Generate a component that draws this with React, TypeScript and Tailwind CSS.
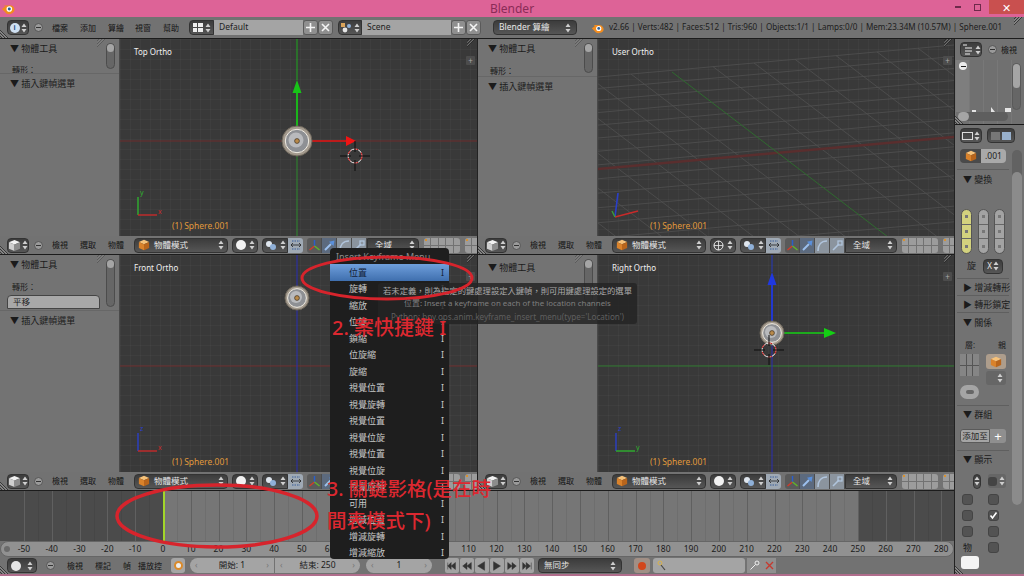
import * as React from "react";

const frames = Array.from({ length: 34 }, (_, i) => -50 + i * 10);

const menuItems = [
  "位置",
  "旋轉",
  "縮放",
  "位旋",
  "鎖縮",
  "位旋縮",
  "旋縮",
  "視覺位置",
  "視覺旋轉",
  "視覺位置",
  "視覺位旋",
  "視覺位置",
  "視覺位旋",
  "視覺旋轉",
  "可用",
  "增減位置",
  "增減旋轉",
  "增減縮放",
];

const Arrows = ({ dark = false }: { dark?: boolean }) => (
  <svg width="6" height="10" viewBox="0 0 6 10" className="shrink-0">
    <path d="M3 0.5 5.5 4H.5z M3 9.5 .5 6h5z" fill={dark ? "#333" : "#cfcfcf"} />
  </svg>
);

const Cube = ({ orange = false, size = 13 }: { orange?: boolean; size?: number }) => (
  <svg width={size} height={size} viewBox="0 0 14 14" className="shrink-0">
    <path d="M7 1 13 3.5 7 6 1 3.5z" fill={orange ? "#f6c27a" : "#f2f2f2"} />
    <path d="M1 3.5 7 6v7L1 10.5z" fill={orange ? "#d9822b" : "#cfcfcf"} />
    <path d="M13 3.5 7 6v7l6-2.5z" fill={orange ? "#b8651c" : "#8c8c8c"} />
  </svg>
);

const Dot = () => (
  <span className="flex h-[9px] w-[9px] shrink-0 items-center justify-center rounded-full border border-[#555] bg-[#9a9a9a]">
    <span className="h-px w-[5px] bg-[#333]" />
  </span>
);

const Dark = ({ className = "", children }: { className?: string; children?: React.ReactNode }) => (
  <div
    className={`flex h-[15px] shrink-0 items-center rounded-[4px] border border-[#333] bg-gradient-to-b from-[#3c3c3c] to-[#565656] text-[8.5px] text-[#e6e6e6] ${className}`}
  >
    {children}
  </div>
);

const Label = ({ children, className = "" }: { children: React.ReactNode; className?: string }) => (
  <span className={`shrink-0 text-[8px] leading-none text-[#151515] ${className}`}>{children}</span>
);

const Corner = ({ className }: { className: string }) => (
  <svg width="10" height="10" viewBox="0 0 10 10" className={`absolute ${className}`}>
    <path d="M0 2 8 10 M0 5 5 10 M0 8 2 10" stroke="#2a2a2a" strokeWidth="0.8" />
    <path d="M0 3.2 6.8 10 M0 6.2 3.8 10" stroke="#a8a8a8" strokeWidth="0.6" />
  </svg>
);

const PlusBtn = ({ x = false }: { x?: boolean }) => (
  <div className="flex h-[15px] w-[15px] shrink-0 items-center justify-center rounded-[3px] border border-[#5a5a5a] bg-[#8f8f8f]">
    <svg width="11" height="11" viewBox="0 0 11 11">
      {x ? (
        <path d="M2 2 9 9 M9 2 2 9" stroke="#f4f4f4" strokeWidth="1.6" />
      ) : (
        <path d="M5.5 1v9 M1 5.5h9" stroke="#f4f4f4" strokeWidth="1.6" />
      )}
    </svg>
  </div>
);

const BlenderLogo = ({ size = 14 }: { size?: number }) => (
  <svg width={size} height={size} viewBox="0 0 16 16" className="shrink-0">
    <path d="M1 9 5 6 3 5h5a6 5 0 1 1-4 7z" fill="#f28c1e" />
    <circle cx="9.5" cy="9.2" r="3.2" fill="#fff" />
    <circle cx="9.5" cy="9.2" r="1.7" fill="#2d5f96" />
  </svg>
);

const Layers = () => (
  <div className="grid h-[15px] w-[36px] shrink-0 grid-cols-5 gap-px overflow-hidden rounded-[3px]">
    {Array.from({ length: 10 }, (_, i) => (
      <span key={i} className="relative bg-[#9c9c9c]">
        {i === 0 && <span className="absolute left-px top-px h-[2px] w-[2px] bg-[#d8912f]" />}
      </span>
    ))}
  </div>
);

const ManipIcon = ({ kind }: { kind: number }) => (
  <div
    className={`flex h-[15px] w-[15px] shrink-0 items-center justify-center border-r border-[#4d4d4d] ${
      kind === 0 ? "rounded-l-[3px] bg-[#5a5a5a]" : kind === 1 ? "bg-[#5c6a7e]" : "bg-[#8b949e]"
    }`}
  >
    <svg width="13" height="13" viewBox="0 0 13 13">
      {kind === 0 && (
        <>
          <path d="M6.5 7V1" stroke="#2b5fc9" strokeWidth="1.5" />
          <path d="M6.5 7 1.5 11" stroke="#d43a2a" strokeWidth="1.5" />
          <path d="M6.5 7 11.5 11" stroke="#5fb52a" strokeWidth="1.5" />
        </>
      )}
      {kind === 1 && (
        <>
          <path d="M2 11 8 5" stroke="#9cc0ee" strokeWidth="2" />
          <path d="M11.5 1.5 10.5 7 6 2.8z" fill="#5a90dc" />
        </>
      )}
      {kind === 2 && <path d="M2 12C2 6 5 2 11 2" fill="none" stroke="#b0c4dc" strokeWidth="1.6" />}
      {kind === 3 && (
        <>
          <path d="M2 11 8 5" stroke="#b0c4dc" strokeWidth="1.6" />
          <rect x="7" y="2" width="4" height="4" fill="none" stroke="#b0c4dc" strokeWidth="1.3" />
        </>
      )}
    </svg>
  </div>
);

const ViewHeader = ({ wire = false, width }: { wire?: boolean; width: string }) => (
  <div className={`relative flex h-[19px] shrink-0 items-center overflow-hidden border-b border-[#1c1c1c] bg-[#727272] pl-[7px] ${width}`}>
    <Corner className="bottom-0 left-0" />
    <Dark className="w-[22px] justify-center gap-px">
      <Cube />
      <Arrows />
    </Dark>
    <span className="ml-[5px] mr-[9px]">
      <Dot />
    </span>
    <Label className="w-[28px]">檢視</Label>
    <Label className="w-[28px]">選取</Label>
    <Label className="w-[26px]">物體</Label>
    <Dark className="w-[94px] gap-[4px] px-[3px]">
      <Cube orange size={12} />
      <span className="flex-1">物體模式</span>
      <Arrows />
    </Dark>
    <Dark className="ml-[4px] w-[26px] justify-center gap-[3px]">
      {wire ? (
        <svg width="11" height="11" viewBox="0 0 11 11">
          <circle cx="5.5" cy="5.5" r="4.5" fill="none" stroke="#eee" />
          <path d="M1 5.5h9 M5.5 1v9" stroke="#eee" strokeWidth="0.8" />
        </svg>
      ) : (
        <span className="h-[10px] w-[10px] rounded-full bg-[#f2f2f2]" />
      )}
      <Arrows />
    </Dark>
    <Dark className="ml-[4px] w-[26px] justify-center gap-[3px] rounded-r-none">
      <svg width="12" height="11" viewBox="0 0 12 11">
        <circle cx="4" cy="4" r="3" fill="#dfe6ee" />
        <circle cx="8" cy="7" r="3" fill="#8fb0d8" />
      </svg>
      <Arrows />
    </Dark>
    <div className="flex h-[15px] w-[15px] shrink-0 items-center justify-center rounded-r-[3px] bg-[#9fa9b4]">
      <svg width="12" height="10" viewBox="0 0 12 10">
        <path d="M1 5h10 M1 5l2-2 M1 5l2 2 M11 5 9 3 M11 5 9 7" stroke="#222" fill="none" strokeWidth="0.8" />
        <path d="M2 1h8 M2 9h8" stroke="#3b5f9a" strokeDasharray="1.5 1" />
      </svg>
    </div>
    <div className="ml-[4px] flex shrink-0">
      <ManipIcon kind={0} />
      <ManipIcon kind={1} />
      <ManipIcon kind={2} />
      <ManipIcon kind={3} />
    </div>
    <Dark className="w-[52px] gap-[2px] rounded-l-none pl-[7px] pr-[3px]">
      <span className="flex-1">全域</span>
      <Arrows />
    </Dark>
    <div className="ml-[5px] flex shrink-0 gap-[5px]">
      <Layers />
      <Layers />
    </div>
  </div>
);

const Sphere = ({ cx, cy, r }: { cx: number; cy: number; r: number }) => (
  <g>
    <circle cx={cx} cy={cy} r={r} fill="#a39a8e" stroke="#6b6459" />
    <circle cx={cx} cy={cy} r={r * 0.78} fill="#8e9094" stroke="#f1ece2" strokeWidth="1" />
    <circle cx={cx - 1} cy={cy - 1} r={r * 0.5} fill="#b9babd" />
    <circle cx={cx} cy={cy} r="2.4" fill="#b98a4a" stroke="#3c3024" strokeWidth="0.7" />
  </g>
);

const Cursor3D = ({ cx, cy }: { cx: number; cy: number }) => (
  <g>
    <circle cx={cx} cy={cy} r="7" fill="none" stroke="#f0f0f0" strokeWidth="1" />
    <circle cx={cx} cy={cy} r="7" fill="none" stroke="#d01818" strokeWidth="1" strokeDasharray="4 4" />
    <path d={`M${cx - 15} ${cy}h11 M${cx + 4} ${cy}h11 M${cx} ${cy - 15}v11 M${cx} ${cy + 4}v11`} stroke="#0c0c0c" strokeWidth="1" />
  </g>
);

const Widget = ({ ox, oy, upColor, rightColor, up, right }: { ox: number; oy: number; upColor: string; rightColor: string; up: string; right: string }) => (
  <g>
    <path d={`M${ox} ${oy}v-18`} stroke={upColor} strokeWidth="1.4" />
    <path d={`M${ox} ${oy}h19`} stroke={rightColor} strokeWidth="1.4" />
    <text x={ox + 2} y={oy - 20} fontSize="7" fill={upColor} fontFamily="Noto Sans">
      {up}
    </text>
    <text x={ox + 20} y={oy - 1} fontSize="7" fill={rightColor} fontFamily="Noto Sans">
      {right}
    </text>
  </g>
);

const ArrowUp = ({ x, top, color, thin }: { x: number; top: number; color: string; thin: number }) => (
  <g>
    <path d={`M${x} 0V${top}`} stroke={color} strokeWidth="0.8" />
    <path d={`M${x} ${top}l-4.5 13h9z`} fill={color} />
    <path d={`M${x} ${top + 13}V${thin}`} stroke={color} strokeWidth="1.8" />
  </g>
);

const Ortho = ({ name, children }: { name: string; children: React.ReactNode }) => (
  <div className="relative min-w-0 flex-1 overflow-hidden bg-[#393939] bg-[linear-gradient(to_right,#ffffff07_1px,transparent_1px),linear-gradient(to_bottom,#ffffff07_1px,transparent_1px)] bg-[length:10px_10px]">
    <svg className="absolute inset-0 h-full w-full">{children}</svg>
    <span className="absolute left-[14px] top-[7px] text-[8px] leading-[11px] text-[#f0f0f0]">{name}</span>
    <span className="absolute bottom-[5px] left-[52px] text-[8.5px] leading-[11px] text-[#e0993c]">(1) Sphere.001</span>
    <Corner className="right-0 top-0 rotate-90" />
    <span className="absolute right-[2px] top-[17px] flex h-[9px] w-[9px] items-center justify-center rounded-[1px] bg-[#4c4c4c] text-[8px] leading-none text-[#aaa]">
      +
    </span>
  </div>
);

type ShelfProps = {
  button?: boolean;
  transformGap?: string;
  insertGap?: string;
  scroll: string;
  top?: string;
};

const Shelf = ({ button, transformGap, insertGap, scroll, top = "pt-[4px]" }: ShelfProps) => (
  <div className="relative w-[120px] shrink-0 overflow-hidden border-r border-[#4a4a4a] bg-[#737373] text-[#1b1b1b]">
    <Corner className="right-[12px] top-0 rotate-90 opacity-40" />
    <div className={`pl-[10px] text-[9px] leading-[12px] ${top}`}>▼ 物體工具</div>
    {transformGap && <div className={`pl-[12px] text-[8px] leading-[10px] ${transformGap}`}>轉形：</div>}
    {button && (
      <div className="ml-[7px] mt-[3px] flex h-[14px] w-[93px] items-center rounded-t-[4px] border border-[#444] bg-[#a8a8a8] pl-[5px] text-[8.5px]">
        平移
      </div>
    )}
    {insertGap && <div className={`relative border-t border-[#676767] bg-[#737373] pl-[10px] pt-[4px] text-[9px] leading-[12px] ${insertGap}`}>▼ 插入鍵幀選單</div>}
    <div className={`absolute right-[4px] top-[4px] w-[9px] rounded-full border border-[#4c4c4c] bg-[#666] ${scroll}`}>
      <div className="h-[8px] rounded-full bg-[#a5a5a5]" />
    </div>
  </div>
);

const perspectiveLines = () => {
  const lines: React.ReactNode[] = [];
  let y = 38;
  for (let i = 0; i < 17; i++) {
    lines.push(<line key={`a${i}`} x1={0} y1={y} x2={356} y2={y - 32} stroke="#505050" strokeWidth="0.8" />);
    y += 11.5 + i * 0.35;
  }
  for (let k = -7; k < 8; k++) {
    if (k === 0) continue;
    const x = 74 + k * 41;
    const top = 38 - 0.09 * x;
    lines.push(<line key={`b${k}`} x1={x} y1={top} x2={x + 290} y2={top + 220} stroke="#505050" strokeWidth="0.8" />);
  }
  return lines;
};

const Sec = ({ children, className = "" }: { children: React.ReactNode; className?: string }) => (
  <div className={`flex items-center pl-[5px] text-[9px] leading-none text-[#1b1b1b] ${className}`}>{children}</div>
);

const Rule = ({ className = "" }: { className?: string }) => <div className={`h-px w-[52px] bg-[#5f5f5f] ${className}`} />;

const SliderCol = ({ on = false }: { on?: boolean }) => (
  <div className={`flex h-[45px] w-[11px] flex-col overflow-hidden rounded-full border border-[#555] ${on ? "bg-[#d3d27e]" : "bg-[#a3a3a3]"}`}>
    {[0, 1, 2].map((i) => (
      <div key={i} className="flex flex-1 items-center justify-center border-b border-[#666] last:border-b-0">
        <span className="h-[3px] w-[3px] bg-[#777]" />
      </div>
    ))}
  </div>
);

const Check = ({ on = false }: { on?: boolean }) => (
  <div className="flex h-[11px] w-[11px] items-center justify-center rounded-[3px] border border-[#444] bg-[#535353]">
    {on && (
      <svg width="9" height="9" viewBox="0 0 9 9">
        <path d="M1.5 4.5 3.5 7 7.5 1.5" fill="none" stroke="#fff" strokeWidth="1.6" />
      </svg>
    )}
  </div>
);

const RightColumn = () => (
  <div className="relative w-[70px] shrink-0 overflow-hidden border-l border-[#222] bg-[#727272]">
    <div className="h-[86px] border-b border-[#1c1c1c]">
      <div className="flex h-[21px] items-center pl-[5px]">
        <Dark className="w-[22px] justify-center gap-[2px]">
          <svg width="11" height="11" viewBox="0 0 11 11">
            <path d="M1 1h4 M3 4h7 M3 7h7 M3 10h5" stroke="#eee" />
          </svg>
          <Arrows />
        </Dark>
        <span className="ml-[6px] mr-[4px]">
          <Dot />
        </span>
        <Label className="whitespace-nowrap">檢視</Label>
      </div>
      <div className="relative h-[64px] bg-[#707070] bg-[linear-gradient(to_right,#ffffff0e_1px,transparent_1px)] bg-[length:14px_100%]">
        <div className="absolute left-[1px] top-0 h-[52px] w-[13px] bg-[#7e7e7e]" />
        <span className="absolute left-[4px] top-[2px] flex h-[8px] w-[8px] items-center justify-center rounded-full bg-[#eee]">
          <span className="h-px w-[5px] bg-[#222]" />
        </span>
        <div className="absolute left-[57px] top-[3px] h-[47px] w-[9px] rounded-full border border-[#595959] bg-[#666]">
          <div className="h-[24px] rounded-full bg-[#a5a5a5]" />
        </div>
        <svg width="50" height="6" viewBox="0 0 50 6" className="absolute left-[14px] top-[47px]">
          <path d="M3 6V3h4v3z M22 0l4 5h-4z M36 1h6v4h-6z" fill="#e4e4e4" />
        </svg>
        <div className="absolute left-[3px] top-[52px] h-[9px] w-[50px] rounded-full bg-[#5e5e5e]">
          <div className="h-[9px] w-[11px] rounded-full bg-[#a5a5a5]" />
        </div>
        <Corner className="bottom-0 left-0" />
      </div>
    </div>
    <div className="flex">
      <div className="w-[57px] shrink-0">
        <div className="flex h-[20px] items-center gap-[5px] pl-[5px] pt-[1px]">
          <Dark className="w-[22px] justify-center gap-px">
            <span className="h-[8px] w-[11px] border border-[#ddd]" />
            <Arrows />
          </Dark>
          <Dark className="w-[28px] gap-[2px] px-[3px]">
            <span className="h-[8px] w-[9px] bg-[#777]" />
            <span className="h-[8px] w-[9px] bg-[#98b0cc]" />
          </Dark>
        </div>
        <div className="ml-[5px] mt-[4px] flex h-[14px] w-[46px]">
          <div className="flex w-[21px] items-center justify-center rounded-l-[4px] bg-[#4a4a4a]">
            <Cube orange size={12} />
          </div>
          <div className="flex flex-1 items-center justify-center rounded-r-[4px] bg-[#a9a9a9] text-[8.5px] text-[#222]">.001</div>
        </div>
        <Rule className="ml-[2px] mt-[6px]" />
        <Sec className="h-[19px] pl-[8px]">▼ 變換</Sec>
        <div className="ml-[6px] mt-[20px] flex w-[44px] justify-between">
          <SliderCol on />
          <SliderCol />
          <SliderCol />
        </div>
        <div className="mt-[5px] flex h-[14px] items-center pl-[12px] text-[9px] text-[#1b1b1b]">
          旋
          <Dark className="ml-[7px] h-[13px] w-[20px] justify-center gap-px text-[8px]">
            X
            <Arrows />
          </Dark>
        </div>
        <Rule className="ml-[2px] mt-[5px]" />
        <Sec className="h-[16px] pl-[8px]">▶ 增減轉形</Sec>
        <Rule className="ml-[2px]" />
        <Sec className="h-[16px] pl-[8px]">▶ 轉形鎖定</Sec>
        <Rule className="ml-[2px]" />
        <Sec className="h-[18px] pl-[8px]">▼ 關係</Sec>
        <div className="mt-[9px] flex h-[10px] text-[8px] leading-[10px] text-[#1b1b1b]">
          <span className="ml-[10px] w-[33px]">層:</span>
          <span>親</span>
        </div>
        <div className="mt-[4px] flex h-[45px] pl-[5px]">
          <div className="flex w-[19px] flex-col justify-between">
            <div className="grid h-[22px] grid-cols-3 gap-px bg-[#555]">
              {[0, 1, 2, 3, 4, 5].map((i) => (
                <span key={i} className="bg-[#858585]" />
              ))}
            </div>
            <div className="flex h-[14px] items-center justify-center rounded-full bg-[#a5a5a5]">
              <span className="h-[4px] w-[8px] rounded-full bg-[#666]" />
            </div>
          </div>
          <div className="ml-[7px] flex w-[20px] flex-col gap-[2px]">
            <div className="flex h-[15px] items-center justify-center rounded-[3px] bg-[#ad9d8c]">
              <Cube orange size={12} />
            </div>
            <div className="flex h-[14px] items-center justify-end rounded-[3px] bg-[#666] pr-[3px]">
              <Arrows />
            </div>
          </div>
        </div>
        <Rule className="ml-[2px] mt-[6px]" />
        <Sec className="h-[16px] pl-[8px]">▼ 群組</Sec>
        <div className="ml-[5px] mt-[7px] flex h-[14px] w-[46px]">
          <div className="flex w-[30px] items-center justify-center rounded-l-[3px] border border-[#5a5a5a] bg-[#a5a5a5] text-[8.5px] text-[#222]">添加至</div>
          <div className="flex flex-1 items-center justify-center rounded-r-[3px] bg-[#8f8f8f] text-[13px] leading-none text-white">+</div>
        </div>
        <Rule className="ml-[2px] mt-[7px]" />
        <Sec className="h-[16px] pl-[8px]">▼ 顯示</Sec>
        <div className="mt-[7px] flex h-[14px] items-center pl-[18px]">
          <Dark className="h-[14px] w-[8px] justify-center rounded-[3px]">
            <Arrows />
          </Dark>
          <div className="ml-[7px] flex h-[14px] w-[18px] items-center justify-end rounded-[3px] bg-[#666] pr-[1px]">
            <span className="mr-auto h-[9px] w-[9px] rounded-[3px] bg-[#444]" />
            <Arrows />
          </div>
        </div>
        <div className="mt-[6px] flex flex-col gap-[5px] pl-[7px]">
          {[false, false, false].map((_, i) => (
            <div key={i} className="flex gap-[15px]">
              <Check />
              <Check on={i === 1} />
            </div>
          ))}
          <div className="flex h-[11px] items-center gap-[15px]">
            <span className="w-[11px] text-center text-[9px] text-[#1b1b1b]">物</span>
            <Check />
          </div>
        </div>
        <div className="ml-[6px] mt-[3px] h-[13px] w-[18px] rounded-[3px] bg-[#f4f4f4]" />
      </div>
      <div className="relative mt-[25px] h-[355px] w-[10px] rounded-full bg-[#626262]">
        <div className="absolute inset-x-0 bottom-0 top-[22px] rounded-full bg-[#8b8b8b]" />
      </div>
    </div>
    <Corner className="bottom-0 left-0" />
  </div>
);

const Field = ({ children, className = "" }: { children: React.ReactNode; className?: string }) => (
  <div className={`flex h-[15px] shrink-0 items-center justify-between bg-[#a4a4a4] px-[5px] text-[8.5px] text-[#1b1b1b] ${className}`}>
    <span className="text-[#777]">‹</span>
    <span>{children}</span>
    <span className="text-[#777]">›</span>
  </div>
);

const playPaths = [
  "M2 2v8M11 2 6 6l5 4zM6 2 2 6l4 4z",
  "M7 2 2 6l5 4zM12 2 7 6l5 4z",
  "M10 1 2 6l8 5z",
  "M3 1l8 5-8 5z",
  "M2 2l5 4-5 4zM7 2l5 4-5 4z",
  "M2 2l4 4-4 4zM6 2l5 4-5 4zM12 2v8",
];

const TimelineHeader = () => (
  <div className="relative flex h-[17px] items-center bg-[#727272] pl-[7px]">
    <Corner className="bottom-0 left-0" />
    <Dark className="w-[30px] justify-center gap-[6px]">
      <span className="h-[10px] w-[10px] rounded-full bg-[#e6e6e6]" />
      <Arrows />
    </Dark>
    <span className="ml-[9px] mr-[12px]">
      <Dot />
    </span>
    <Label className="w-[28px]">檢視</Label>
    <Label className="w-[28px]">標記</Label>
    <Label className="w-[15px]">幀</Label>
    <Label className="w-[33px] whitespace-nowrap">播放控</Label>
    <div className="flex h-[15px] w-[14px] shrink-0 items-center justify-center rounded-[3px] bg-[#a5a5a5]">
      <span className="h-[9px] w-[9px] rounded-full border-2 border-[#d98a2b] bg-[#eee]" />
    </div>
    <Field className="ml-[5px] w-[84px] rounded-l-full">開始: 1</Field>
    <Field className="ml-px w-[85px] rounded-r-full">結束: 250</Field>
    <Field className="ml-[6px] w-[66px] rounded-full">1</Field>
    <div className="ml-[13px] flex shrink-0 gap-px">
      {playPaths.map((d) => (
        <div key={d} className="flex h-[15px] w-[14px] items-center justify-center rounded-[2px] bg-[#a3a3a3]">
          <svg width="12" height="12" viewBox="0 0 14 12">
            <path d={d} fill="#333" stroke="#333" strokeWidth="0.6" />
          </svg>
        </div>
      ))}
    </div>
    <Dark className="ml-[4px] w-[84px] justify-between px-[5px]">
      <span>無同步</span>
      <Arrows />
    </Dark>
    <div className="ml-[12px] flex h-[15px] w-[16px] shrink-0 items-center justify-center rounded-[3px] bg-[#a18f85]">
      <span className="h-[8px] w-[8px] rounded-full bg-[#d3461c]" />
    </div>
    <div className="ml-[3px] flex h-[15px] w-[92px] shrink-0 items-center rounded-[3px] bg-[#a4a4a4] pl-[3px]">
      <svg width="12" height="12" viewBox="0 0 12 12">
        <circle cx="4" cy="3" r="2" fill="none" stroke="#d9b24a" />
        <path d="M5 5 9 10" stroke="#444" strokeWidth="1.2" />
      </svg>
    </div>
    <div className="ml-[2px] flex h-[15px] w-[15px] shrink-0 items-center justify-center bg-[#8f8f8f]">
      <svg width="11" height="11" viewBox="0 0 11 11">
        <circle cx="8" cy="3" r="2" fill="none" stroke="#eee" />
        <path d="M6.5 4.5 1.5 9.5" stroke="#eee" />
      </svg>
    </div>
    <div className="flex h-[15px] w-[14px] shrink-0 items-center justify-center bg-[#8f8f8f]">
      <svg width="11" height="11" viewBox="0 0 11 11">
        <path d="M2 2 9 9 M9 2 2 9" stroke="#c53a30" strokeWidth="1.4" />
      </svg>
    </div>
  </div>
);

export default function App() {
  return (
    <div className="relative flex h-[576px] w-[1024px] flex-col overflow-hidden bg-[#727272] [font-family:'Noto_Sans','Noto_Sans_CJK_TC',sans-serif]">
      {/* window title */}
      <div className="relative flex h-[17px] shrink-0 items-center justify-center bg-[#dd6397] text-[12px] text-[#8a2c57]">
        <span className="absolute left-[1px] top-[1px]">
          <BlenderLogo />
        </span>
        Blender
        <div className="absolute right-0 top-0 flex h-[14px] items-center">
          <span className="mr-[13px] h-[2px] w-[6px] bg-[#6e2a4b]" />
          <span className="mr-[8px] h-[7px] w-[7px] border border-[#6e2a4b]" />
          <span className="flex h-[14px] w-[35px] items-center justify-center bg-[#c9504f] text-[11px] leading-none text-white">✕</span>
        </div>
      </div>

      {/* info bar */}
      <div className="relative flex h-[22px] shrink-0 items-center border-b border-[#1c1c1c] bg-[#727272] pl-[7px]">
        <Corner className="bottom-0 left-0" />
        <Dark className="w-[22px] justify-center gap-px">
          <span className="flex h-[10px] w-[10px] items-center justify-center rounded-full bg-[#cfe0f2] text-[7px] font-bold leading-none text-[#2b4f88]">i</span>
          <Arrows />
        </Dark>
        <span className="ml-[5px] mr-[9px]">
          <Dot />
        </span>
        <Label className="w-[28px]">檔案</Label>
        <Label className="w-[28px]">添加</Label>
        <Label className="w-[27px]">算繪</Label>
        <Label className="w-[28px]">視窗</Label>
        <Label className="w-[26px]">幫助</Label>
        <Dark className="w-[25px] justify-center gap-[2px] rounded-r-none">
          <span className="grid h-[9px] w-[10px] grid-cols-2 gap-px">
            <span className="bg-[#eee]" />
            <span className="bg-[#eee]" />
            <span className="bg-[#eee]" />
            <span className="bg-[#eee]" />
          </span>
          <Arrows />
        </Dark>
        <div className="flex h-[15px] w-[89px] shrink-0 items-center bg-[#a4a4a4] pl-[5px] text-[8.5px] text-[#222]">Default</div>
        <PlusBtn />
        <PlusBtn x />
        <Dark className="ml-[5px] w-[24px] justify-center gap-[2px] rounded-r-none">
          <svg width="11" height="10" viewBox="0 0 11 10">
            <rect x="0" y="0" width="4" height="4" fill="#d9a35a" />
            <circle cx="8" cy="3" r="2" fill="#8fb0d8" />
            <circle cx="4" cy="7" r="2.4" fill="#e6e6e6" />
          </svg>
          <Arrows />
        </Dark>
        <div className="flex h-[15px] w-[89px] shrink-0 items-center bg-[#a4a4a4] pl-[5px] text-[8.5px] text-[#222]">Scene</div>
        <PlusBtn />
        <PlusBtn x />
        <Dark className="ml-[12px] w-[84px] justify-between px-[5px]">
          <span>Blender 算繪</span>
          <Arrows />
        </Dark>
        <span className="ml-[14px] mr-[5px] shrink-0">
          <BlenderLogo size={13} />
        </span>
        <span className="whitespace-nowrap text-[8.1px] leading-none text-[#1d1d1d]">v2.66 | Verts:482 | Faces:512 | Tris:960 | Objects:1/1 | Lamps:0/0 | Mem:23.34M (10.57M) | Sphere.001</span>
        <Corner className="right-0 top-0 rotate-90" />
      </div>

      {/* main */}
      <div className="flex min-h-0 flex-1">
        <div className="flex w-[954px] shrink-0 flex-col">
          <div className="flex h-[197px] shrink-0">
            <div className="flex w-[478px] border-r border-[#222]">
              <Shelf transformGap="mt-[10px]" insertGap="-mt-[2px]" scroll="h-[26px]" />
              <Ortho name="Top Ortho">
                <path d="M0 102H357" stroke="#6e2c2c" strokeWidth="1" />
                <path d="M177 116V197" stroke="#2f8a2f" strokeWidth="1" />
                <ArrowUp x={177} top={41} color="#18c418" thin={90} />
                <path d="M190 102H227" stroke="#e01414" strokeWidth="1.4" />
                <path d="M226 97l10 5-10 5z" fill="#f01414" />
                <Sphere cx={177} cy={102} r={15} />
                <Cursor3D cx={235} cy={117} />
                <Widget ox={18} oy={176} upColor="#2fb02f" rightColor="#c82a2a" up="y" right="x" />
              </Ortho>
            </div>
            <div className="flex w-[476px]">
              <Shelf transformGap="mt-[11px]" insertGap="mt-0" scroll="h-[30px]" />
              <Ortho name="User Ortho">
                {perspectiveLines()}
                <path d="M0 130 356 98" stroke="#5a2e2e" strokeWidth="2.5" />
                <path d="M74 33 290 198" stroke="#2f6a2f" strokeWidth="1" />
                <path d="M17 178 20 154" stroke="#2a3fc8" strokeWidth="1.6" />
                <path d="M17 178 40 172" stroke="#c82a2a" strokeWidth="1.6" />
                <path d="M17 178 14 172" stroke="#3aa03a" strokeWidth="1.4" />
              </Ortho>
            </div>
          </div>
          <div className="flex">
            <ViewHeader width="w-[478px] border-r" />
            <ViewHeader wire width="w-[476px]" />
          </div>
          <div className="flex h-[217px] shrink-0">
            <div className="flex w-[478px] border-r border-[#222]">
              <Shelf transformGap="mt-[11px]" button insertGap="mt-[1px]" scroll="h-[48px]" />
              <Ortho name="Front Ortho">
                <path d="M0 111H357" stroke="#6e2c2c" strokeWidth="1" />
                <path d="M177 0V217" stroke="#2a2fb4" strokeWidth="1" />
                <Sphere cx={177} cy={43} r={12} />
                <Widget ox={18} oy={196} upColor="#2a3fc8" rightColor="#c82a2a" up="z" right="x" />
              </Ortho>
            </div>
            <div className="flex w-[476px]">
              <Shelf top="pt-[7px]" scroll="h-[44px]" />
              <Ortho name="Right Ortho">
                <path d="M0 111H357" stroke="#2f7a2f" strokeWidth="1" />
                <path d="M174 90V217" stroke="#2a2fb4" strokeWidth="1" />
                <ArrowUp x={174} top={17} color="#2038e0" thin={68} />
                <path d="M186 78H227" stroke="#14d014" strokeWidth="1.4" />
                <path d="M226 73l12 5-12 5z" fill="#14d014" />
                <Sphere cx={174} cy={78} r={12} />
                <Cursor3D cx={171} cy={95} />
                <Widget ox={18} oy={196} upColor="#2a3fc8" rightColor="#2fb02f" up="z" right="y" />
              </Ortho>
            </div>
          </div>
          <div className="flex">
            <ViewHeader width="w-[478px] border-r" />
            <ViewHeader width="w-[476px]" />
          </div>

          {/* timeline */}
          <div className="relative flex h-[50px] shrink-0 overflow-hidden">
            <div className="w-[24px] shrink-0 bg-[#4b4b4b]" />
            {frames.map((f) => (
              <div
                key={f}
                className={`w-[27.8px] shrink-0 border-l border-[#606060] bg-[linear-gradient(to_right,transparent_13px,#00000012_13px,#00000012_14px,transparent_14px)] ${f < 0 || f >= 250 ? "bg-[#4b4b4b]" : "bg-[#767676]"}`}
              />
            ))}
            <div className="absolute bottom-0 left-[163px] top-0 w-[2px] bg-[#a2d62a]" />
          </div>
          <div className="flex h-[16px] shrink-0 items-center rounded-full border border-[#666] bg-[#919191] pl-[3px] text-[8.5px] text-[#1b1b1b]">
            <span className="h-[6px] w-[6px] shrink-0 rounded-full bg-[#6a6a6a]" />
            {frames.map((f) => (
              <span key={f} className="w-[27.8px] shrink-0 text-center leading-none">
                {f}
              </span>
            ))}
          </div>
          <TimelineHeader />
        </div>
        <RightColumn />
      </div>
      <div className="h-[2px] shrink-0 bg-[#b06d8c]" />

      {/* keyframe menu */}
      <div className="absolute left-[330px] top-[248px] h-[311px] w-[119px] overflow-hidden rounded-[4px] bg-[#1e1e1e] text-[9px] text-[#c8c8c8]">
        <div className="h-[16px] pl-[6px] pt-[3px] leading-[12px] text-[#8c8c8c]">Insert Keyframe Menu</div>
        {menuItems.map((item, i) => (
          <div
            key={i}
            className={`flex h-[16.5px] items-center justify-between pl-[19px] pr-[5px] ${i === 0 ? "bg-gradient-to-b from-[#6f9fdc] to-[#3f6fae] text-[#152238]" : ""}`}
          >
            <span>{item}</span>
            <span>I</span>
          </div>
        ))}
      </div>

      {/* tooltip */}
      <div className="absolute left-[378px] top-[283px] flex h-[41px] w-[259px] flex-col items-center justify-center rounded-[3px] bg-[#242424d9] leading-[13px] whitespace-nowrap">
        <span className="text-[8.3px] text-[#a9a9a9]">若未定義，則為指定的鍵處理設定入鍵幀，則可用鍵處理設定的選單</span>
        <span className="text-[7.9px] text-[#7f7f7f]">位置: Insert a keyframe on each of the location channels</span>
        <span className="text-[8.1px] text-[#5f5f5f]">Python: bpy.ops.anim.keyframe_insert_menu(type='Location')</span>
      </div>

      {/* red annotations */}
      <svg className="absolute inset-0 h-[576px] w-[1024px]" viewBox="0 0 1024 576">
        <ellipse cx="387" cy="278" rx="85" ry="21" fill="none" stroke="#d7242c" strokeWidth="3" />
        <ellipse cx="217" cy="516" rx="100" ry="31" fill="none" stroke="#d7242c" strokeWidth="3.5" />
      </svg>
      <div className="absolute left-[332px] top-[315px] whitespace-nowrap text-[20px] font-medium leading-[26px] text-[#dc2830]">2. 案快捷鍵 I</div>
      <div className="absolute left-[327px] top-[473px] w-[175px] text-[19.5px] font-medium leading-[32px] text-[#dc2830]">3. 關鍵影格(是在時間表模式下)</div>
    </div>
  );
}
